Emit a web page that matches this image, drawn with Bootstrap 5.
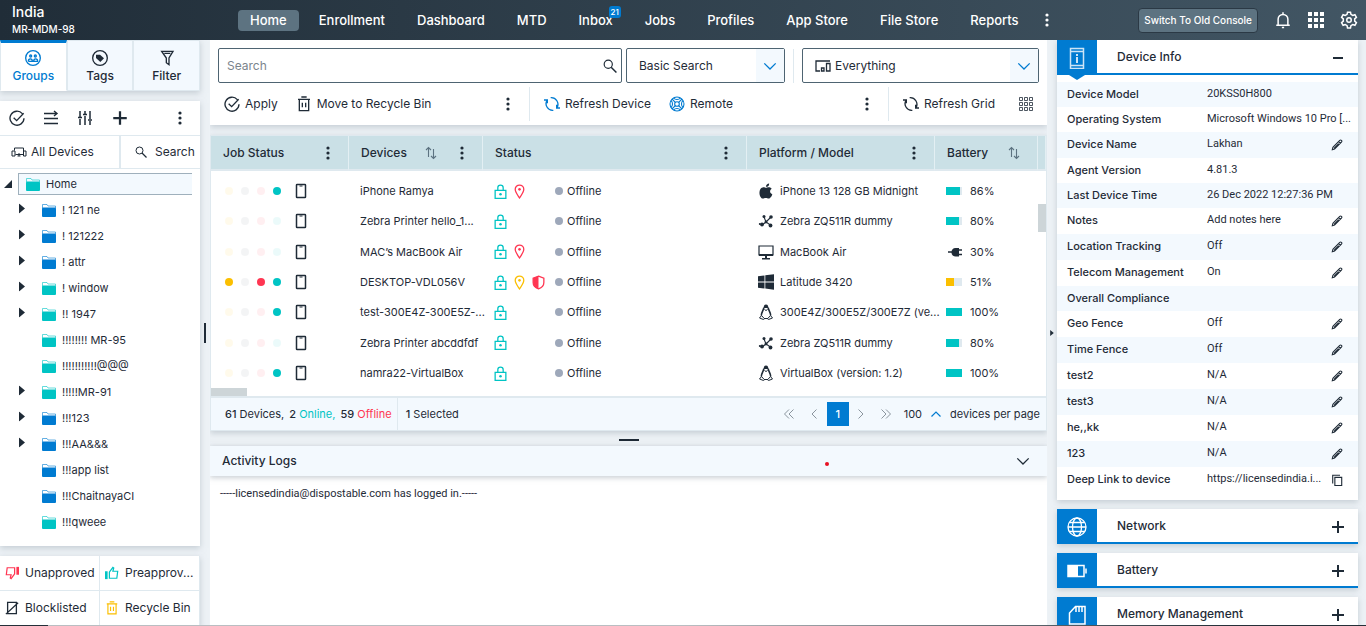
<!DOCTYPE html>
<html lang="en">
<head>
<meta charset="utf-8">
<meta name="viewport" content="width=device-width, initial-scale=1">
<title>India – Device console</title>
<link href="https://cdn.jsdelivr.net/npm/bootstrap@5.3.0/dist/css/bootstrap.min.css" rel="stylesheet">
<style>
:root{--ink:#1f2b37;--blue:#007bd1;--teal:#00c4c4;--red:#ff3652;--amber:#fbbf00;--pale:#f3f9fe;--line:#dfe9ef;--edge:#4e6472;--head:#cae0e6}
body{font-family:Inter,"Open Sans",sans-serif;font-size:12px;line-height:16px;color:var(--ink);background:#edf2f6;height:100vh;overflow:hidden}
button,input,select{font-family:inherit;font-size:12px;line-height:16px;color:inherit}
a{color:inherit;text-decoration:none}
svg{display:block;flex:none;fill:none;stroke:currentColor;stroke-width:2}
.solid{fill:currentColor;stroke:none}
.i12{width:12px;height:12px}.i14{width:14px;height:14px}.i16{width:16px;height:16px}.i18{width:18px;height:18px}
.plain{background:none;border:0;padding:0;display:flex;align-items:center}
.panel{background:#fff;box-shadow:0 2px 6px #9aa6b080}
.c-blue{color:var(--blue)}.c-teal{color:var(--teal)}.c-red{color:var(--red)}.c-amber{color:var(--amber)}
.topbar{height:40px;background:linear-gradient(90deg,#202d38,#425664);color:#fff;flex:none}
.brand{width:238px;padding:0 0 1px 12px}
.brand strong{font-size:14px;line-height:18px;font-weight:500}
.brand span{font-size:10px;line-height:16px;font-weight:500}
.topbar nav{gap:8px}
.topbar nav a{font-size:13px;line-height:21px;padding:0 12px;font-weight:500;position:relative;border-radius:4px}
.topbar nav a.on{background:#5d7381}
.count{position:absolute;right:4px;top:-4px;background:var(--blue);color:#fff;font-size:8px;line-height:12px;padding:0 2px;border-radius:3px}
.switch{background:#5d7381;border:1px solid #2b3945;border-radius:4px;color:#fff;font-size:10px;font-weight:500;height:25px;padding:0 5px}
.side{width:200px;flex:none}
.stack{gap:10px}
.tabs button{flex:1;height:51px;background:var(--pale);border:1px solid var(--line);flex-direction:column;font-weight:500;gap:2px;padding-top:9px}
.tabs button.on{background:#fff;color:var(--blue);border-top:3px solid var(--blue);border-bottom-color:#fff;padding-top:7px}
.rowline{border-bottom:1px solid var(--line)}
.treetools{height:35px;padding:0 12px 0 9px;gap:18px}
.finder{height:33px}
.alldev{width:121px;border-right:2px solid var(--line)!important;padding-left:11px;gap:4px}
.find{padding-left:14px;gap:8px}
.tree{list-style:none;margin:0;padding:0 0 11px;font-size:11px}
.tree li{height:26px;padding-left:19px}
.tree .twist{width:23px;padding-bottom:4px}
.tree a{gap:6px}
.tree .root{height:28px;padding:4px 8px 2px 4px}
.tree .root a{flex:1;height:22px;background:var(--pale);border:1px solid #9fb0bc;border-right:0;padding-left:7px}
.lists{display:grid;grid-template-columns:1fr 1fr;flex:none}
.lists a{border:1px solid var(--line);border-width:0 1px 1px 0;gap:6px;padding-left:5px;height:35px;white-space:nowrap}
.gutter{width:10px;flex:none}
.grip{background:var(--ink)}
.gutter .grip{width:2px;height:20px}
.hgrip{height:15px;flex:none}
.hgrip .grip{width:20px;height:2px;margin-top:3px}
.field{height:35px;border:1px solid var(--edge);border-radius:2px;background:#fff}
.field input,.field select{border:0;outline:0;background:none;appearance:none;padding:0;flex:1;min-width:0}
.field input::placeholder{color:#7b858d}
.mode{width:159px;padding-left:12px}
.scope{width:237px;padding-left:12px;gap:4px}
.drop{width:28px;height:33px;background:var(--pale);color:var(--blue);display:flex;align-items:center;justify-content:center}
.tools{font-weight:500;height:42px;display:grid;grid-template-columns:311fr 359fr 159fr;align-items:center}
.tools button{gap:5px}
.tools .seg{display:flex;align-items:center;height:34px;gap:18px;padding-right:13px}
.tools .seg-a{padding-left:6px}
.tools .seg+.seg{border-left:1px solid var(--line);padding-left:14px}
.vr-line{width:1px;background:var(--line);height:34px}
.gridbox{position:relative;border:1px solid var(--line);margin-top:10px}
.devices{width:100%;table-layout:fixed;border-collapse:separate;border-spacing:0;font-size:11px}
.devices th{background:var(--head);height:35px;font-weight:500;font-size:12px;padding:0 12px 0 12px;border-right:1px solid #e3eff3;border-bottom:2px solid var(--line)}
.devices td{height:30px;padding:0 0 0 11px;white-space:nowrap}
.devices tbody tr:nth-child(3n) td{height:31px}
.devices tbody:before{content:"";display:block;height:5px}
.w-job{width:138px}.w-dev{width:134px}.w-plat{width:188px}.w-bat{width:103px}.w-end{width:8px}
.th-gap{gap:16px}
.th-sort{padding-right:14px}
.jobs{gap:8px;padding-left:3px}
.jobs .off{opacity:.08}
.dot{width:8px;height:8px;border-radius:4px;flex:none;background:currentColor}
.states{width:57px;gap:6px}
.states svg{width:13px;height:15px}
.model{gap:6px}
.idle{background:#9ea8ba}
.meter{width:16px;height:8px;background:var(--line)}
.meter div{height:8px;background:currentColor}
.vthumb{position:absolute;right:0;top:68px;width:8px;height:28px;background:#cdd5d8}
.hthumb{width:36px;height:8px;background:#cdd5d8}
.gridfoot{height:34px;background:var(--pale);border-top:2px solid var(--line);font-size:11px}
.gridfoot b{font-weight:500}
.tally{padding:0 5px 0 14px;gap:5px;border-right:1px solid var(--line)}
.pages{color:#8b959e;padding-right:6px}
.pages b{width:22px;height:24px;line-height:24px;background:var(--blue);color:#fff;text-align:center}
.pages .step{width:25px;justify-content:center}
.pages .per{gap:8px;padding-left:5px;color:var(--ink)}
.pages .per button{gap:8px;font-size:11px}
.loghead{height:30px;background:var(--pale);box-shadow:0 2px 5px #9aa6b080;font-weight:500;flex:none;padding:0 17px 0 12px}
.mark-red{width:4px;height:4px;border-radius:2px;background:#e81123;margin:6px 187px 0 auto}
.logtext{font-family:Roboto,sans-serif;font-size:11px;padding:10px}
.info{width:301px;flex:none;gap:9px}
.info section{padding-bottom:7px}
.acc{height:35px;border-bottom:2px solid var(--blue)!important;font-weight:500;background:#fff!important;width:100%}
.acc .tile{width:40px;height:35px;background:var(--blue);color:#fff;display:flex;align-items:center;justify-content:center;margin-bottom:-2px;position:relative}
.acc .tile.open:after{content:"";position:absolute;left:12px;top:35px;border:8px solid transparent;border-width:5px 8px 0;border-top-color:var(--blue)}
.tile svg{width:22px;height:22px}
.acc .sign{margin:3px 12px 0 auto}
.facts{width:100%;table-layout:fixed;font-size:11px;margin-top:7px}
.facts tr:nth-child(odd){background:var(--pale)}
.facts th,.facts td{vertical-align:top;padding:4px 0 0}
.facts th{font-weight:500;padding-left:10px;height:25px}
.facts td{white-space:nowrap;font-family:Roboto,sans-serif}
.facts tr.edit th{height:26px}
.facts .act button{padding:3px 0 0 7px}
.w-key{width:150px}.w-act{width:34px}
.base{height:1px;flex:none;background:linear-gradient(90deg,#243039 48px,#b9bec2 48px,#b9bec2 50%,#243039 90%)}
</style>
</head>
<body class="d-flex flex-column">
<svg width="0" height="0" class="position-absolute" aria-hidden="true">
<symbol id="dots" viewBox="0 0 16 16"><g class="solid"><circle cx="8" cy="3" r="1.600"/><circle cx="8" cy="8" r="1.600"/><circle cx="8" cy="13" r="1.600"/></g></symbol>
<symbol id="check" viewBox="0 0 24 24"><path d="M20 5.500A10.500 10.500 0 1 0 22.500 12.500M7 11.500l4.500 4.500L22 5"/></symbol>
<symbol id="bin" viewBox="0 0 24 24"><path d="M8 1.500h8M3 5h18M5 5v17h14V5M9.500 10v7M14.500 10v7"/></symbol>
<symbol id="mag" viewBox="0 0 24 24"><circle cx="9" cy="9" r="7"/><path d="M14 14l9 9" stroke-width="2.500"/></symbol>
<symbol id="chev" viewBox="0 0 16 16"><path d="M1.500 5L8 11.500 14.500 5" stroke-width="1.500"/></symbol>
<symbol id="sync" viewBox="0 0 24 24"><path d="M14 21.500A10 10 0 0 1 4.500 6.500M10 2.500A10 10 0 0 1 19.500 17.500M0 6h5v5M24 18h-5v-5"/></symbol>
<symbol id="plus" viewBox="0 0 16 16"><path d="M8 2v12M2 8h12"/></symbol>
<symbol id="apps" viewBox="0 0 16 16"><path class="solid" d="M0 0h4v4H0zM6 0h4v4H6zM12 0h4v4h-4zM0 6h4v4H0zM6 6h4v4H6zM12 6h4v4h-4zM0 12h4v4H0zM6 12h4v4H6zM12 12h4v4h-4z"/></symbol>
<symbol id="folder" viewBox="0 0 14 14"><path d="M.5 5V1.500H5L6 3h7.500v2" stroke-width="1" opacity=".6"/><rect class="solid" y="4.500" width="14" height="9.500" rx="1"/></symbol>
<symbol id="phone" viewBox="0 0 12 16"><rect x="1.500" y="1.500" width="9" height="13" rx=".6" stroke-width="1.500"/><path d="M4.500 3h3" stroke-width="1"/></symbol>
<symbol id="lock" viewBox="0 0 12 14"><path d="M1 6h10v7.400H1zM3.500 6V3.500a2.500 2.500 0 0 1 5 0V6" stroke-width="1.200"/><circle class="solid" cx="6" cy="9.500" r="1.200"/></symbol>
<symbol id="pin" viewBox="0 0 12 14"><path d="M6 13C4 10 2 7.500 2 5a4 4 0 0 1 8 0c0 2.500-2 5-4 8z" stroke-width="1.200"/><circle class="solid" cx="6" cy="5" r="1.200"/></symbol>
<symbol id="shield" viewBox="0 0 12 14"><path d="M6 1l5 2v4c0 3-2 5-5 6-3-1-5-3-5-6V3z" stroke-width="1.200"/><path class="solid" d="M6 1v12C3 12 1 10 1 7V3z"/></symbol>
<symbol id="apple" viewBox="0 0 24 24"><path class="solid" d="M17.500 12.700c0-2.500 2-3.700 2.200-3.800-1.200-1.700-3-2-3.700-2-1.600-.2-3.100.9-3.900.9-.8 0-2-.9-3.300-.9-1.700 0-3.300 1-4.200 2.500-3 4.500-.5 12.800 3.500 12.800 1.200 0 1.700-.8 3.700-.8s2.300.8 3.600.8c3 0 5-5 5.100-5.800-.1 0-3-1.100-3-3.700zM15.200 5.300c.7-.8 1.200-2 1-3.300-2.500.3-4.600 2.500-4.200 4.500 1.200.1 2.500-.5 3.200-1.200z" transform="translate(-1.500 -1.500) scale(1.120)"/></symbol>
<symbol id="node" viewBox="0 0 16 16"><path d="M4 12l4-3 5-5M6 4l2 5 5 3.500" stroke-width="1.100"/><g class="solid"><circle cx="6" cy="3.500" r="1.500"/><circle cx="13" cy="4" r="1.800"/><circle cx="4" cy="11.500" r="1.900"/><circle cx="1.800" cy="11" r="1"/><circle cx="12.500" cy="12.500" r="1.900"/><circle cx="8" cy="9" r="1.400"/></g></symbol>
<symbol id="screen" viewBox="0 0 16 16"><path d="M1 2h14v9H1z" stroke-width="1.200"/><path class="solid" d="M1 10h14v2H1zM7 12h2v2h3v1.500H4V14h3z"/></symbol>
<symbol id="win" viewBox="0 0 16 16"><path class="solid" d="M0 2.300l6.500-.9v6.100H0zM7.300 1.300L16 .2v7.300H7.300zM0 8.400h6.500v6.200L0 13.700zM7.300 8.400H16v7.400l-8.700-1.200z"/></symbol>
<symbol id="tux" viewBox="0 0 16 16"><path class="solid" d="M8 .5c-1.800 0-2.400 1.300-2.200 3.500h4.400C10.400 1.800 9.800.5 8 .5z"/><path d="M5.800 3.500C5.800 6 3.500 8 3.300 11.500M10.200 3.500c0 2.500 2.300 4.500 2.500 8" stroke-width="1.600"/><path d="M6.500 5.500l1.500 1 1.500-1M1.500 14l2-2.500 3 3.300-1 .7zM14.500 14l-2-2.500-3 3.300 1 .7zM6 14.500h4" stroke-width="1"/></symbol>
<symbol id="plug" viewBox="0 0 16 16"><path d="M2 8h4M12 6h4M12 10.500h4" stroke-width="1.300"/><path class="solid" d="M13 4v8.500H9.500C7 12.500 5.500 11 5.500 8.300S7 4 9.500 4z"/></symbol>
<symbol id="pencil" viewBox="0 0 14 14"><path d="M1.500 12.500l.7-2.800 8-8a1.200 1.200 0 0 1 2 2l-8 8zM9 3l2 2M3.500 11L9 5.500" stroke-width="1.200"/></symbol>
<symbol id="copy" viewBox="0 0 14 14"><path d="M4.500 4h8v9.500h-8zM2 11V1.500h8.500" stroke-width="1.300"/></symbol>
<symbol id="right" viewBox="0 0 6 10"><path class="solid" d="M0 0l6 5-6 5z"/></symbol>
<symbol id="sort" viewBox="0 0 12 14"><path d="M3.500 11V1.500M1 4l2.500-2.500L6 4M8.500 3v9.500M6 10l2.500 2.500L11 10" stroke="#5d7381" stroke-width="1.100"/></symbol>
<symbol id="thumb" viewBox="0 0 16 16"><path d="M5 7l4-5.500 1 .8L9 6h5.500l-1 8H5z" stroke-width="1.400"/><path class="solid" d="M0 6h3v9H0z"/></symbol>
</svg>

<header class="topbar d-flex align-items-center">
  <div class="brand d-flex flex-column"><strong>India</strong><span>MR-MDM-98</span></div>
  <nav class="d-flex align-items-center">
    <a href="#" class="on">Home</a><a href="#">Enrollment</a><a href="#">Dashboard</a><a href="#">MTD</a><a href="#">Inbox<span class="count">21</span></a><a href="#">Jobs</a><a href="#">Profiles</a><a href="#">App Store</a><a href="#">File Store</a><a href="#">Reports</a>
    <button class="plain text-white" aria-label="More"><svg class="i16"><use href="#dots"/></svg></button>
  </nav>
  <div class="ms-auto d-flex align-items-center pe-2">
    <button class="switch">Switch To Old Console</button>
    <button class="plain text-white ms-3" aria-label="Notifications"><svg class="i18" viewBox="0 0 24 24"><path d="M3 19h18M5.500 19v-8a6.500 6.500 0 0 1 13 0v8M12 4V1.500M10.500 22h3"/></svg></button>
    <button class="plain text-white mx-3" aria-label="Apps"><svg class="i16"><use href="#apps"/></svg></button>
    <button class="plain text-white" aria-label="Settings"><svg class="i18" viewBox="0 0 24 24"><path d="M10 1.500h4l.6 3 2.400 1.400 2.900-1 2 3.500L19.600 10.500v3l2.300 2-2 3.600-2.900-1-2.400 1.400-.6 3h-4l-.6-3L7 18.100l-2.900 1-2-3.500 2.300-2.100v-3L2.100 8.400l2-3.500 2.900 1 2.400-1.400z"/><circle cx="12" cy="12" r="3"/></svg></button>
  </div>
</header>

<div class="d-flex flex-fill overflow-hidden pe-2">
  <aside class="side stack d-flex flex-column">
    <div class="panel tabs d-flex">
      <button class="plain on"><svg class="i16" viewBox="0 0 24 24"><circle cx="12" cy="12" r="11"/><path d="M5 17c0-5 6-5 6 0M13 17c0-5 6-5 6 0zM5 17h8"/><circle cx="8.500" cy="9" r="1.500"/><circle cx="15.500" cy="9" r="1.500"/></svg>Groups</button>
      <button class="plain"><svg class="i16" viewBox="0 0 24 24"><circle cx="12" cy="12" r="11"/><path class="solid" d="M6 7h6l6 5.500-5.500 5.500L6 12z"/></svg>Tags</button>
      <button class="plain"><svg class="i16" viewBox="0 0 24 24"><path d="M4 2h17l-6 10v10l-4-3v-7zM4 2l7 10M8 5h9"/></svg>Filter</button>
    </div>
    <section class="panel">
      <div class="treetools rowline d-flex align-items-center">
        <button class="plain" aria-label="Select"><svg class="i16"><use href="#check"/></svg></button>
        <button class="plain" aria-label="Move"><svg class="i16" viewBox="0 0 16 16"><path d="M1 3.500h13M1 8.500h14M1 13.500h14M11 1l3 2.500L11 6" stroke-width="1.400"/></svg></button>
        <button class="plain" aria-label="Adjust"><svg class="i16" viewBox="0 0 16 16"><path d="M3 1v6M3 9v6M8 1v3M8 6v9M13 1v8M13 11v4M1 7.500h4M6 4.500h4M11 10h4" stroke-width="1.500"/></svg></button>
        <button class="plain" aria-label="Add"><svg class="i18"><use href="#plus"/></svg></button>
        <button class="plain ms-auto" aria-label="More"><svg class="i16"><use href="#dots"/></svg></button>
      </div>
      <div class="finder rowline d-flex">
        <button class="plain alldev"><svg class="i16" viewBox="0 0 16 16"><path d="M1 7h3v5H1zM12.500 7h2.500v5h-2.500zM3.500 6.500V4h9v3M4.500 10.500h7.500M8 9v3M6.500 12h3" stroke-width="1"/></svg>All Devices</button>
        <button class="plain find"><svg class="i12"><use href="#mag"/></svg>Search</button>
      </div>
      <ul class="tree" id="tree">
        <li class="root d-flex align-items-center"><svg class="i14" viewBox="0 0 14 14"><path class="solid" d="M8 3v8H0z"/></svg><a href="#" class="d-flex align-items-center"><svg class="i14 c-teal"><use href="#folder"/></svg>Home</a></li>
      </ul>
    </section>
    <div class="panel lists">
      <a href="#" class="d-flex align-items-center"><svg class="i14 c-red" viewBox="0 0 16 16"><use href="#thumb" width="16" height="16" transform="rotate(180 8 8)"/></svg>Unapproved</a>
      <a href="#" class="d-flex align-items-center"><svg class="i14 c-teal"><use href="#thumb"/></svg>Preapprov...</a>
      <a href="#" class="d-flex align-items-center"><svg class="i14" viewBox="0 0 16 16"><path d="M3 1.500h10v13H3zM1 15L15 2" stroke-width="1.500"/></svg>Blocklisted</a>
      <a href="#" class="d-flex align-items-center"><svg class="i14 c-amber"><use href="#bin"/></svg>Recycle Bin</a>
    </div>
  </aside>
  <div class="gutter d-flex align-items-center justify-content-center"><span class="grip"></span></div>

  <main class="flex-fill d-flex flex-column overflow-hidden">
    <section class="panel">
      <div class="d-flex align-items-center px-2 pt-2">
        <label class="field d-flex align-items-center ps-2 pe-1 me-1 flex-fill"><input type="text" placeholder="Search" aria-label="Search"><svg class="i14"><use href="#mag"/></svg></label>
        <label class="field mode d-flex align-items-center"><select aria-label="Search mode"><option>Basic Search</option></select><span class="drop"><svg class="i14"><use href="#chev"/></svg></span></label>
        <span class="vr-line mx-2"></span>
        <label class="field scope d-flex align-items-center"><svg class="i16" viewBox="0 0 16 16"><path d="M5 13H1V3h14M11.500 5.500H15V13h-3.500zM6.500 13v-3H9v3z" stroke-width="1.300"/></svg><select aria-label="Scope"><option>Everything</option></select><span class="drop"><svg class="i14"><use href="#chev"/></svg></span></label>
      </div>
      <div class="tools ps-2">
        <div class="seg seg-a">
          <button class="plain"><svg class="i16"><use href="#check"/></svg>Apply</button>
          <button class="plain"><svg class="i16"><use href="#bin"/></svg>Move to Recycle Bin</button>
          <button class="plain ms-auto" aria-label="More"><svg class="i16"><use href="#dots"/></svg></button>
        </div>
        <div class="seg">
          <button class="plain"><svg class="i16 c-blue"><use href="#sync"/></svg>Refresh Device</button>
          <button class="plain"><svg class="i16 c-blue" viewBox="0 0 24 24"><g stroke-width="1.600"><circle cx="12" cy="12" r="10.500"/><circle cx="12" cy="12" r="3.500"/><path d="M4.500 4.500L9.500 9.500M19.500 4.500l-5 5M4.500 19.500l5-5M19.500 19.500l-5-5M7 3c2 3 8 3 10 0M7 21c2-3 8-3 10 0M3 7c3 2 3 8 0 10M21 7c-3 2-3 8 0 10"/></g></svg>Remote</button>
          <button class="plain ms-auto" aria-label="More"><svg class="i16"><use href="#dots"/></svg></button>
        </div>
        <div class="seg">
          <button class="plain"><svg class="i16"><use href="#sync"/></svg>Refresh Grid</button>
          <button class="plain ms-auto" aria-label="Columns"><svg class="i16" viewBox="0 0 16 16"><path d="M1.500 1.500h3v3h-3zM6.500 1.500h3v3h-3zM11.500 1.500h3v3h-3zM1.500 6.500h3v3h-3zM6.500 6.500h3v3h-3zM11.500 6.500h3v3h-3zM1.500 11.500h3v3h-3zM6.500 11.500h3v3h-3zM11.500 11.500h3v3h-3z" stroke-width=".8"/></svg></button>
        </div>
      </div>
    </section>
    <section class="panel gridbox">
      <table class="devices">
        <colgroup><col class="w-job"><col class="w-dev"><col><col class="w-plat"><col class="w-bat"><col class="w-end"></colgroup>
        <thead><tr>
          <th scope="col"><div class="d-flex align-items-center">Job Status<svg class="i16 ms-auto"><use href="#dots"/></svg></div></th>
          <th scope="col"><div class="d-flex align-items-center th-gap">Devices<svg class="i14 ms-auto"><use href="#sort"/></svg><svg class="i16"><use href="#dots"/></svg></div></th>
          <th scope="col"><div class="d-flex align-items-center">Status<svg class="i16 ms-auto"><use href="#dots"/></svg></div></th>
          <th scope="col"><div class="d-flex align-items-center">Platform / Model<svg class="i16 ms-auto"><use href="#dots"/></svg></div></th>
          <th scope="col"><div class="d-flex align-items-center">Battery<svg class="i14 ms-auto me-1"><use href="#sort"/></svg></div></th>
          <th class="p-0" aria-hidden="true"></th>
        </tr></thead>
        <tbody id="rows"></tbody>
      </table>
      <div class="hthumb"></div>
      <div class="vthumb"></div>
      <div class="gridfoot d-flex align-items-stretch">
        <div class="tally d-flex align-items-center"><span><b>61</b> Devices,</span><span><b>2</b> <span class="c-teal">Online,</span></span><span><b>59</b> <span class="c-red">Offline</span></span></div>
        <div class="d-flex align-items-center ps-2"><b>1</b>&nbsp;Selected</div>
        <div class="pages d-flex align-items-center ms-auto">
          <button class="plain step" aria-label="First page"><svg class="i12" viewBox="0 0 12 12"><path d="M6 1.500L1.500 6 6 10.500M10.500 1.500L6 6l4.500 4.500" stroke-width="1"/></svg></button>
          <button class="plain step" aria-label="Previous page"><svg class="i12" viewBox="0 0 12 12"><path d="M8.500 1.500L4 6l4.500 4.500" stroke-width="1"/></svg></button>
          <b>1</b>
          <button class="plain step" aria-label="Next page"><svg class="i12" viewBox="0 0 12 12"><path d="M3.500 1.500L8 6l-4.500 4.500" stroke-width="1"/></svg></button>
          <button class="plain step" aria-label="Last page"><svg class="i12" viewBox="0 0 12 12"><path d="M1.500 1.500L6 6l-4.500 4.500M6 1.500L10.500 6 6 10.500" stroke-width="1"/></svg></button>
          <span class="per d-flex align-items-center"><button class="plain">100<svg class="i12 c-blue" viewBox="0 0 12 12"><path d="M1.500 8.500L6 4l4.500 4.500" stroke-width="1.200"/></svg></button>devices per page</span>
        </div>
      </div>
    </section>
    <div class="hgrip d-flex align-items-center justify-content-center"><span class="grip"></span></div>
    <section class="panel flex-fill">
      <div class="loghead d-flex align-items-center">Activity Logs<span class="mark-red"></span><button class="plain" aria-label="Collapse"><svg class="i14"><use href="#chev"/></svg></button></div>
      <div class="logtext">-----licensedindia@dispostable.com has logged in.-----</div>
    </section>
  </main>

  <div class="gutter d-flex align-items-center justify-content-center"><svg width="4" height="6"><use href="#right"/></svg></div>
  <aside class="info d-flex flex-column">
    <section class="panel">
      <button class="plain acc align-items-stretch"><span class="tile open"><svg viewBox="0 0 22 22"><path d="M4.500 1.500h13v20h-13zM4.500 4.500h13M4.500 18.500h13" stroke-width="1.500" opacity=".8"/><path d="M11 10v6M11 7v2" stroke-width="1.600"/></svg></span><span class="align-self-center ps-3 ms-1">Device Info</span><svg class="i16 sign align-self-center"><path d="M3 8h10"/></svg></button>
      <table class="facts"><colgroup><col class="w-key"><col><col class="w-act"></colgroup><tbody id="facts"></tbody></table>
    </section>
    <button class="panel plain acc align-items-stretch flex-shrink-0"><span class="tile"><svg viewBox="0 0 22 22"><g stroke-width="1.300"><circle cx="11" cy="11" r="9"/><ellipse cx="11" cy="11" rx="4.500" ry="9"/><path d="M2 11h18M3.500 6.500h15M3.500 15.500h15"/></g></svg></span><span class="align-self-center ps-3 ms-1">Network</span><svg class="i16 sign align-self-center"><use href="#plus"/></svg></button>
    <button class="panel plain acc align-items-stretch flex-shrink-0"><span class="tile"><svg viewBox="0 0 22 22"><path d="M2 5.500h16v11H2zM20 8.500v5" stroke-width="1.500"/><path class="solid" d="M2 5h10v12H2z"/></svg></span><span class="align-self-center ps-3 ms-1">Battery</span><svg class="i16 sign align-self-center"><use href="#plus"/></svg></button>
    <button class="panel plain acc align-items-stretch flex-shrink-0"><span class="tile"><svg viewBox="0 0 22 22"><path d="M3.500 20V9l6-6.500H19V20zM10 3v5M13 3v5M16 3v5" stroke-width="1.500"/></svg></span><span class="align-self-center ps-3 ms-1">Memory Management</span><svg class="i16 sign align-self-center"><use href="#plus"/></svg></button>
  </aside>
</div>
<div class="base"></div>
<script src="https://cdn.jsdelivr.net/npm/bootstrap@5.3.0/dist/js/bootstrap.bundle.min.js"></script>
<script>
const icon = (id, cls) => `<svg class="${cls}"><use href="#${id}"/></svg>`;

const groups = [
  ['! 121 ne', 'blue', 1], ['! 121222', 'blue', 1], ['! attr', 'blue', 1], ['! window', 'teal', 1], ['!! 1947', 'teal', 1],
  ['!!!!!!!! MR-95', 'teal', 0], ['!!!!!!!!!!!@@@', 'teal', 0], ['!!!!!MR-91', 'teal', 1], ['!!!123', 'blue', 1],
  ['!!!AA&amp;&amp;&amp;', 'blue', 1], ['!!!app list', 'blue', 0], ['!!!ChaitnayaCI', 'blue', 0], ['!!!qweee', 'teal', 0]
];
document.getElementById('tree').insertAdjacentHTML('beforeend', groups.map(([name, tone, open]) =>
  `<li class="d-flex align-items-center"><span class="twist">${open ? '<svg width="6" height="11" viewBox="0 0 6 10"><use href="#right"/></svg>' : ''}</span>` +
  `<a href="#" class="d-flex align-items-center">${icon('folder', 'i14 c-' + tone)}${name}</a></li>`).join(''));

// name, lit job dots, extra status icons, platform icon, model, battery level, battery tone
const devices = [
  ['iPhone Ramya', [0,0,0,1], [['pin','red']], 'apple', 'iPhone 13 128 GB Midnight', 86, 'teal'],
  ['Zebra Printer hello_1...', [0,0,0,0], [], 'node', 'Zebra ZQ511R dummy', 80, 'teal'],
  ['MAC\u2019s MacBook Air', [0,0,0,0], [['pin','red']], 'screen', 'MacBook Air', 30, ''],
  ['DESKTOP-VDL056V', [1,0,1,1], [['pin','amber'],['shield','red']], 'win', 'Latitude 3420', 51, 'amber'],
  ['test-300E4Z-300E5Z-...', [0,0,0,1], [], 'tux', '300E4Z/300E5Z/300E7Z (ve...', 100, 'teal'],
  ['Zebra Printer abcddfdf', [0,0,0,0], [], 'node', 'Zebra ZQ511R dummy', 80, 'teal'],
  ['namra22-VirtualBox', [0,0,0,1], [], 'tux', 'VirtualBox (version: 1.2)', 100, 'teal']
];
const dotTones = ['c-amber', 'text-secondary', 'c-red', 'c-teal'];
document.getElementById('rows').innerHTML = devices.map(([name, jobs, marks, os, model, level, tone]) => `<tr>
  <td><div class="jobs d-flex align-items-center">${jobs.map((on, i) => `<span class="dot ${dotTones[i]} ${on ? '' : 'off'}"></span>`).join('')}${icon('phone', 'i16 ms-1')}</div></td>
  <td>${name}</td>
  <td><div class="d-flex align-items-center"><span class="states d-flex">${icon('lock', 'c-teal')}${marks.map(([m, t]) => icon(m, 'c-' + t)).join('')}</span><span class="dot idle ms-1"></span><span class="ps-1">Offline</span></div></td>
  <td><div class="model d-flex align-items-center">${icon(os, 'i16')}${model}</div></td>
  <td colspan="2"><div class="d-flex align-items-center gap-2">${tone ? `<div class="meter c-${tone}"><div style="width:${level}%"></div></div>` : icon('plug', 'i16')}${level}%</div></td>
</tr>`).join('');

const facts = [
  ['Device Model', '20KSS0H800'], ['Operating System', 'Microsoft Windows 10 Pro [...'], ['Device Name', 'Lakhan', 'pencil'],
  ['Agent Version', '4.81.3'], ['Last Device Time', '26 Dec 2022 12:27:36 PM'], ['Notes', 'Add notes here', 'pencil'],
  ['Location Tracking', 'Off', 'pencil'], ['Telecom Management', 'On', 'pencil'], ['Overall Compliance', ''],
  ['Geo Fence', 'Off', 'pencil'], ['Time Fence', 'Off', 'pencil'], ['test2', 'N/A', 'pencil'], ['test3', 'N/A', 'pencil'],
  ['he,,kk', 'N/A', 'pencil'], ['123', 'N/A', 'pencil'], ['Deep Link to device', 'https://licensedindia.i...', 'copy']
];
document.getElementById('facts').innerHTML = facts.map(([k, v, act]) => act
  ? `<tr class="edit"><th scope="row">${k}</th><td>${v}</td><td class="act"><button class="plain" aria-label="${act === 'copy' ? 'Copy' : 'Edit'}">${icon(act, 'i12')}</button></td></tr>`
  : `<tr><th scope="row">${k}</th><td colspan="2">${v}</td></tr>`).join('');
</script>
</body>
</html>
